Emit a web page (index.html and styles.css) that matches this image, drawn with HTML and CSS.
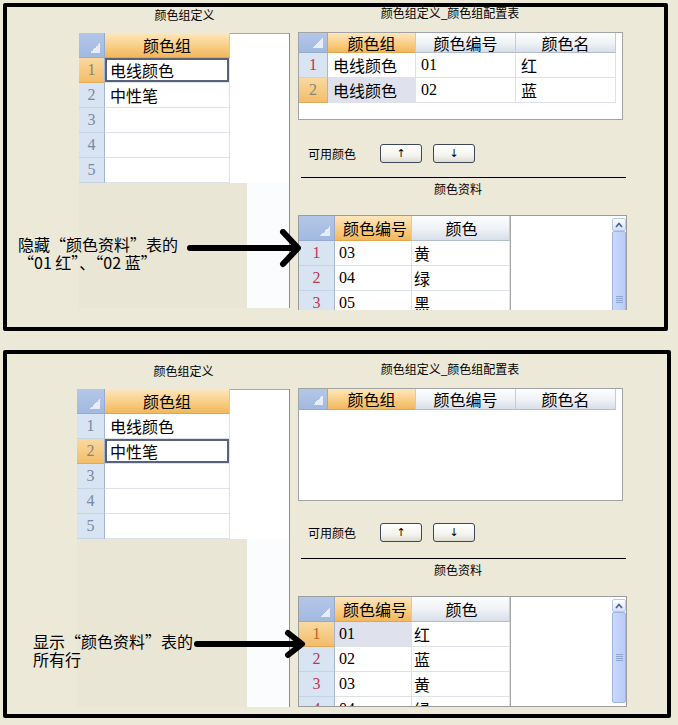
FILE: index.html
```html
<!DOCTYPE html>
<html lang="zh-CN">
<head>
    <meta charset="UTF-8">
    <meta name="viewport" content="width=device-width, initial-scale=1.0">
    <title>颜色组定义</title>
    <link rel="stylesheet" href="styles.css">
</head>
<body>
<div class="shot">

    <!-- before: the two configured colours are hidden -->
    <section class="panel panel-hide">
        <div class="form-left">
            <div class="caption">颜色组定义</div>
            <div class="grid group-grid">
                <div class="row head">
                    <div class="corner"></div>
                    <div class="hcell on c-group">颜色组</div>
                </div>
                <div class="row"><div class="rh on">1</div><div class="cell c-group picked">电线颜色</div></div>
                <div class="row"><div class="rh">2</div><div class="cell c-group">中性笔</div></div>
                <div class="row"><div class="rh">3</div><div class="cell c-group"></div></div>
                <div class="row"><div class="rh">4</div><div class="cell c-group"></div></div>
                <div class="row"><div class="rh">5</div><div class="cell c-group"></div></div>
            </div>
            <div class="foot"><div class="mask"></div><div class="blank"></div></div>
        </div>

        <div class="form-right">
            <div class="caption caption-cfg">颜色组定义_颜色组配置表</div>
            <div class="grid cfg-grid">
                <div class="row head">
                    <div class="corner"></div>
                    <div class="hcell on c-name">颜色组</div>
                    <div class="hcell c-code">颜色编号</div>
                    <div class="hcell c-code">颜色名</div>
                </div>
                <div class="row">
                    <div class="rh red">1</div>
                    <div class="cell c-name">电线颜色</div>
                    <div class="cell c-code num">01</div>
                    <div class="cell c-code">红</div>
                </div>
                <div class="row">
                    <div class="rh on">2</div>
                    <div class="cell c-name soft">电线颜色</div>
                    <div class="cell c-code num">02</div>
                    <div class="cell c-code">蓝</div>
                </div>
            </div>

            <div class="toolbar">
                <span>可用颜色</span>
                <button class="move-btn">↑</button>
                <button class="move-btn">↓</button>
            </div>
            <div class="rule"></div>
            <div class="caption caption-colors">颜色资料</div>

            <div class="grid color-grid">
                <div class="cols">
                    <div class="row head">
                        <div class="corner"></div>
                        <div class="hcell on c-no">颜色编号</div>
                        <div class="hcell c-color">颜色</div>
                    </div>
                    <div class="row"><div class="rh red">1</div><div class="cell c-no num">03</div><div class="cell c-color">黄</div></div>
                    <div class="row"><div class="rh red">2</div><div class="cell c-no num">04</div><div class="cell c-color">绿</div></div>
                    <div class="row"><div class="rh red">3</div><div class="cell c-no num">05</div><div class="cell c-color">黑</div></div>
                </div>
                <div class="vscroll">
                    <div class="sb-up">
                        <svg width="8" height="6" viewBox="0 0 8 6"><polyline points="1,5 4,1.5 7,5" fill="none" stroke="#4a5e86" stroke-width="1.6"/></svg>
                    </div>
                    <div class="sb-thumb"><span class="grip"></span></div>
                </div>
            </div>
        </div>

        <p class="note">隐藏“颜色资料”表的<br>“01 红”、“02 蓝”</p>
        <svg class="pointer" width="116" height="40" viewBox="0 0 116 40">
            <line x1="3" y1="19" x2="109" y2="19" stroke="#000" stroke-width="6" stroke-linecap="round"/>
            <polyline points="96,3 111,19 96,35" fill="none" stroke="#000" stroke-width="6" stroke-linecap="round" stroke-linejoin="round"/>
        </svg>
    </section>

    <!-- after: every row of the colour list is shown -->
    <section class="panel panel-show">
        <div class="form-left">
            <div class="caption">颜色组定义</div>
            <div class="grid group-grid">
                <div class="row head">
                    <div class="corner"></div>
                    <div class="hcell on c-group">颜色组</div>
                </div>
                <div class="row"><div class="rh">1</div><div class="cell c-group">电线颜色</div></div>
                <div class="row"><div class="rh on">2</div><div class="cell c-group picked">中性笔</div></div>
                <div class="row"><div class="rh">3</div><div class="cell c-group"></div></div>
                <div class="row"><div class="rh">4</div><div class="cell c-group"></div></div>
                <div class="row"><div class="rh">5</div><div class="cell c-group"></div></div>
            </div>
            <div class="foot"><div class="mask"></div><div class="blank"></div></div>
        </div>

        <div class="form-right">
            <div class="caption caption-cfg">颜色组定义_颜色组配置表</div>
            <div class="grid cfg-grid">
                <div class="row head">
                    <div class="corner"></div>
                    <div class="hcell on c-name">颜色组</div>
                    <div class="hcell c-code">颜色编号</div>
                    <div class="hcell c-code">颜色名</div>
                </div>
            </div>

            <div class="toolbar">
                <span>可用颜色</span>
                <button class="move-btn">↑</button>
                <button class="move-btn">↓</button>
            </div>
            <div class="rule"></div>
            <div class="caption caption-colors">颜色资料</div>

            <div class="grid color-grid">
                <div class="cols">
                    <div class="row head">
                        <div class="corner"></div>
                        <div class="hcell on c-no">颜色编号</div>
                        <div class="hcell c-color">颜色</div>
                    </div>
                    <div class="row"><div class="rh on deep">1</div><div class="cell c-no num soft">01</div><div class="cell c-color">红</div></div>
                    <div class="row"><div class="rh red">2</div><div class="cell c-no num">02</div><div class="cell c-color">蓝</div></div>
                    <div class="row"><div class="rh red">3</div><div class="cell c-no num">03</div><div class="cell c-color">黄</div></div>
                    <div class="row"><div class="rh red">4</div><div class="cell c-no num">04</div><div class="cell c-color">绿</div></div>
                </div>
                <div class="vscroll">
                    <div class="sb-up">
                        <svg width="8" height="6" viewBox="0 0 8 6"><polyline points="1,5 4,1.5 7,5" fill="none" stroke="#4a5e86" stroke-width="1.6"/></svg>
                    </div>
                    <div class="sb-thumb"><span class="grip"></span></div>
                </div>
            </div>
        </div>

        <p class="note">显示“颜色资料”表的<br>所有行</p>
        <svg class="pointer" width="112" height="32" viewBox="0 0 112 32">
            <line x1="3" y1="16" x2="106" y2="16" stroke="#000" stroke-width="6" stroke-linecap="round"/>
            <polyline points="94,5 108,16 94,27" fill="none" stroke="#000" stroke-width="6" stroke-linecap="round" stroke-linejoin="round"/>
        </svg>
    </section>

</div>
</body>
</html>
```

FILE: styles.css
```css
*{
    margin: 0px;
    padding: 0px;
    box-sizing: border-box;
}

body{
    background-color: #ece9d8;
    font-family: "Noto Sans CJK SC", sans-serif;
    color: #000;
}

.shot{
    display: flex;
    flex-direction: column;
    gap: 19px;
    padding: 3px 0px 0px 3px;
}

.panel{
    position: relative;
    display: flex;
    gap: 8px;
    border: 4px solid #000;
    border-radius: 2px;
    background-color: #ece9d8;
}

.panel-hide{
    width: 665px;
    height: 328px;
    padding-left: 72px;
}

.panel-show{
    width: 668px;
    height: 368px;
    padding: 9px 0px 0px 70px;
}

/* left form */

.form-left{
    width: 211px;
    display: flex;
    flex-direction: column;
}

.panel-show .form-left{
    width: 213px;
}

.caption{
    font-size: 12px;
    line-height: 16px;
    text-align: center;
}

.form-left .caption{
    height: 26px;
}

.caption-cfg{
    height: 25px;
    line-height: 12px;
    padding-right: 25px;
}

.caption-colors{
    height: 37px;
    padding: 3px 9px 0px 0px;
}

.grid{
    background-color: #fff;
}

.row{
    display: flex;
    height: 25px;
}

.group-grid{
    --rh: 26px;
    border-right: 1px solid #8e8e8e;
    box-shadow: inset 0px 1px 0px #a9a9a9;
}

.panel-show .group-grid{
    --rh: 28px;
}

.cfg-grid{
    --rh: 29px;
    width: 325px;
    height: 88px;
    border: 1px solid #a3a3a3;
}

.panel-show .cfg-grid{
    height: 113px;
}

.cfg-grid .head{
    height: 20px;
}

.panel-show .cfg-grid .head{
    height: 21px;
}

.color-grid{
    --rh: 36px;
    display: flex;
    height: 95px;
    border: 1px solid #9c9c9c;
    border-bottom: 0px;
    overflow: hidden;
}

.panel-show .color-grid{
    height: 111px;
    border-bottom: 1px solid #9c9c9c;
}

.cols{
    border-right: 1px solid #a7a7a7;
}

.corner{
    position: relative;
    width: var(--rh);
    background: linear-gradient(#b3c7e8, #a2b9e0);
    border-right: 1px solid #95aad0;
    border-bottom: 1px solid #95aad0;
}

.corner::after{
    content: "";
    position: absolute;
    right: 4px;
    bottom: 4px;
    width: 10px;
    height: 10px;
    background: linear-gradient(135deg, transparent 50%, #e6edf8 50%);
}

.hcell{
    display: flex;
    align-items: center;
    justify-content: center;
    font-size: 16px;
    background: linear-gradient(#fcfdfe, #eef1f6 55%, #d8dfe9);
    border-right: 1px solid #c6ccd7;
    border-bottom: 1px solid #b4bdcb;
}

.hcell.on{
    background: linear-gradient(#fde7bd, #f9d08a 50%, #f3b75c);
    border-bottom: 1px solid #e2a651;
}

.rh{
    width: var(--rh);
    display: flex;
    align-items: center;
    justify-content: center;
    font-family: "Liberation Serif", serif;
    font-size: 16px;
    color: #7789a4;
    background-color: #d9e4f3;
    border-right: 1px solid #a4b6d2;
    border-bottom: 1px solid #c6d3e6;
}

.rh.red{
    color: #c3344f;
}

.rh.on{
    color: #8b8470;
    background: linear-gradient(#f9d9a1, #f3bd6b);
    border-bottom: 1px solid #e0a95b;
}

.rh.deep{
    color: #c2621f;
}

.cell{
    display: flex;
    align-items: center;
    padding-left: 5px;
    font-size: 16px;
    border-right: 1px solid #dde1e8;
    border-bottom: 1px solid #dde1e8;
}

.num{
    font-family: "Liberation Serif", serif;
    font-size: 16px;
}

.cell.soft{
    background-color: #dfe2ec;
}

.cell.picked{
    box-shadow: inset 0px 0px 0px 2px #59627a;
}

.c-group{ width: 125px; }
.c-name{ width: 88px; }
.c-code{ width: 100px; }
.c-no{ width: 77px; padding-left: 4px; }
.c-color{ width: 98px; padding-left: 2px; }

.foot{
    display: flex;
    height: 125px;
}

.panel-show .foot{
    height: 168px;
}

.mask{
    flex: 1;
    background-color: #e9e6d6;
}

.blank{
    width: 43px;
    background-color: #fbfcfd;
    border-right: 1px solid #8e8e8e;
}

/* right form */

.form-right{
    width: 329px;
    display: flex;
    flex-direction: column;
}

.toolbar{
    height: 57px;
    display: flex;
    align-items: flex-start;
    padding: 24px 0px 0px 10px;
    font-size: 12px;
}

.panel-show .toolbar{
    padding-top: 22px;
}

.toolbar span{
    line-height: 19px;
    margin-right: 24px;
}

.move-btn{
    width: 42px;
    height: 19px;
    margin-right: 11px;
    border: 1px solid #3d4759;
    border-radius: 3px;
    background: linear-gradient(#ffffff, #f4f4ef 60%, #dedbd0);
    font-family: "DejaVu Sans", sans-serif;
    font-size: 11px;
    line-height: 16px;
    color: #000;
}

.rule{
    height: 1px;
    margin: 0px 1px 0px 3px;
    background-color: #000;
}

.vscroll{
    width: 14px;
    margin: 2px 0px 0px auto;
    display: flex;
    flex-direction: column;
}

.sb-up{
    height: 13px;
    flex-shrink: 0;
    display: flex;
    align-items: center;
    justify-content: center;
    background: linear-gradient(#fdfeff, #d5e0f8);
    border: 1px solid #b8c9ee;
    border-radius: 2px;
}

.sb-thumb{
    height: 136px;
    flex-shrink: 0;
    display: flex;
    align-items: center;
    justify-content: center;
    background: linear-gradient(90deg, #cad9fb, #b9ccf6);
    border: 1px solid #9fb5e6;
    border-radius: 2px;
}

.panel-show .sb-thumb{
    height: 91px;
}

.grip{
    width: 7px;
    height: 7px;
    background: repeating-linear-gradient(#8ea5d6 0px, #8ea5d6 1px, transparent 1px, transparent 2px);
}

/* callouts drawn over the screenshots */

.note{
    position: absolute;
    font-size: 16px;
    line-height: 18px;
    color: #000;
}

.panel-hide .note{
    left: 11px;
    top: 228px;
}

.panel-show .note{
    left: 26px;
    top: 278px;
}

.pointer{
    position: absolute;
}

.panel-hide .pointer{
    left: 180px;
    top: 222px;
}

.panel-show .pointer{
    left: 187px;
    top: 274px;
}
```
